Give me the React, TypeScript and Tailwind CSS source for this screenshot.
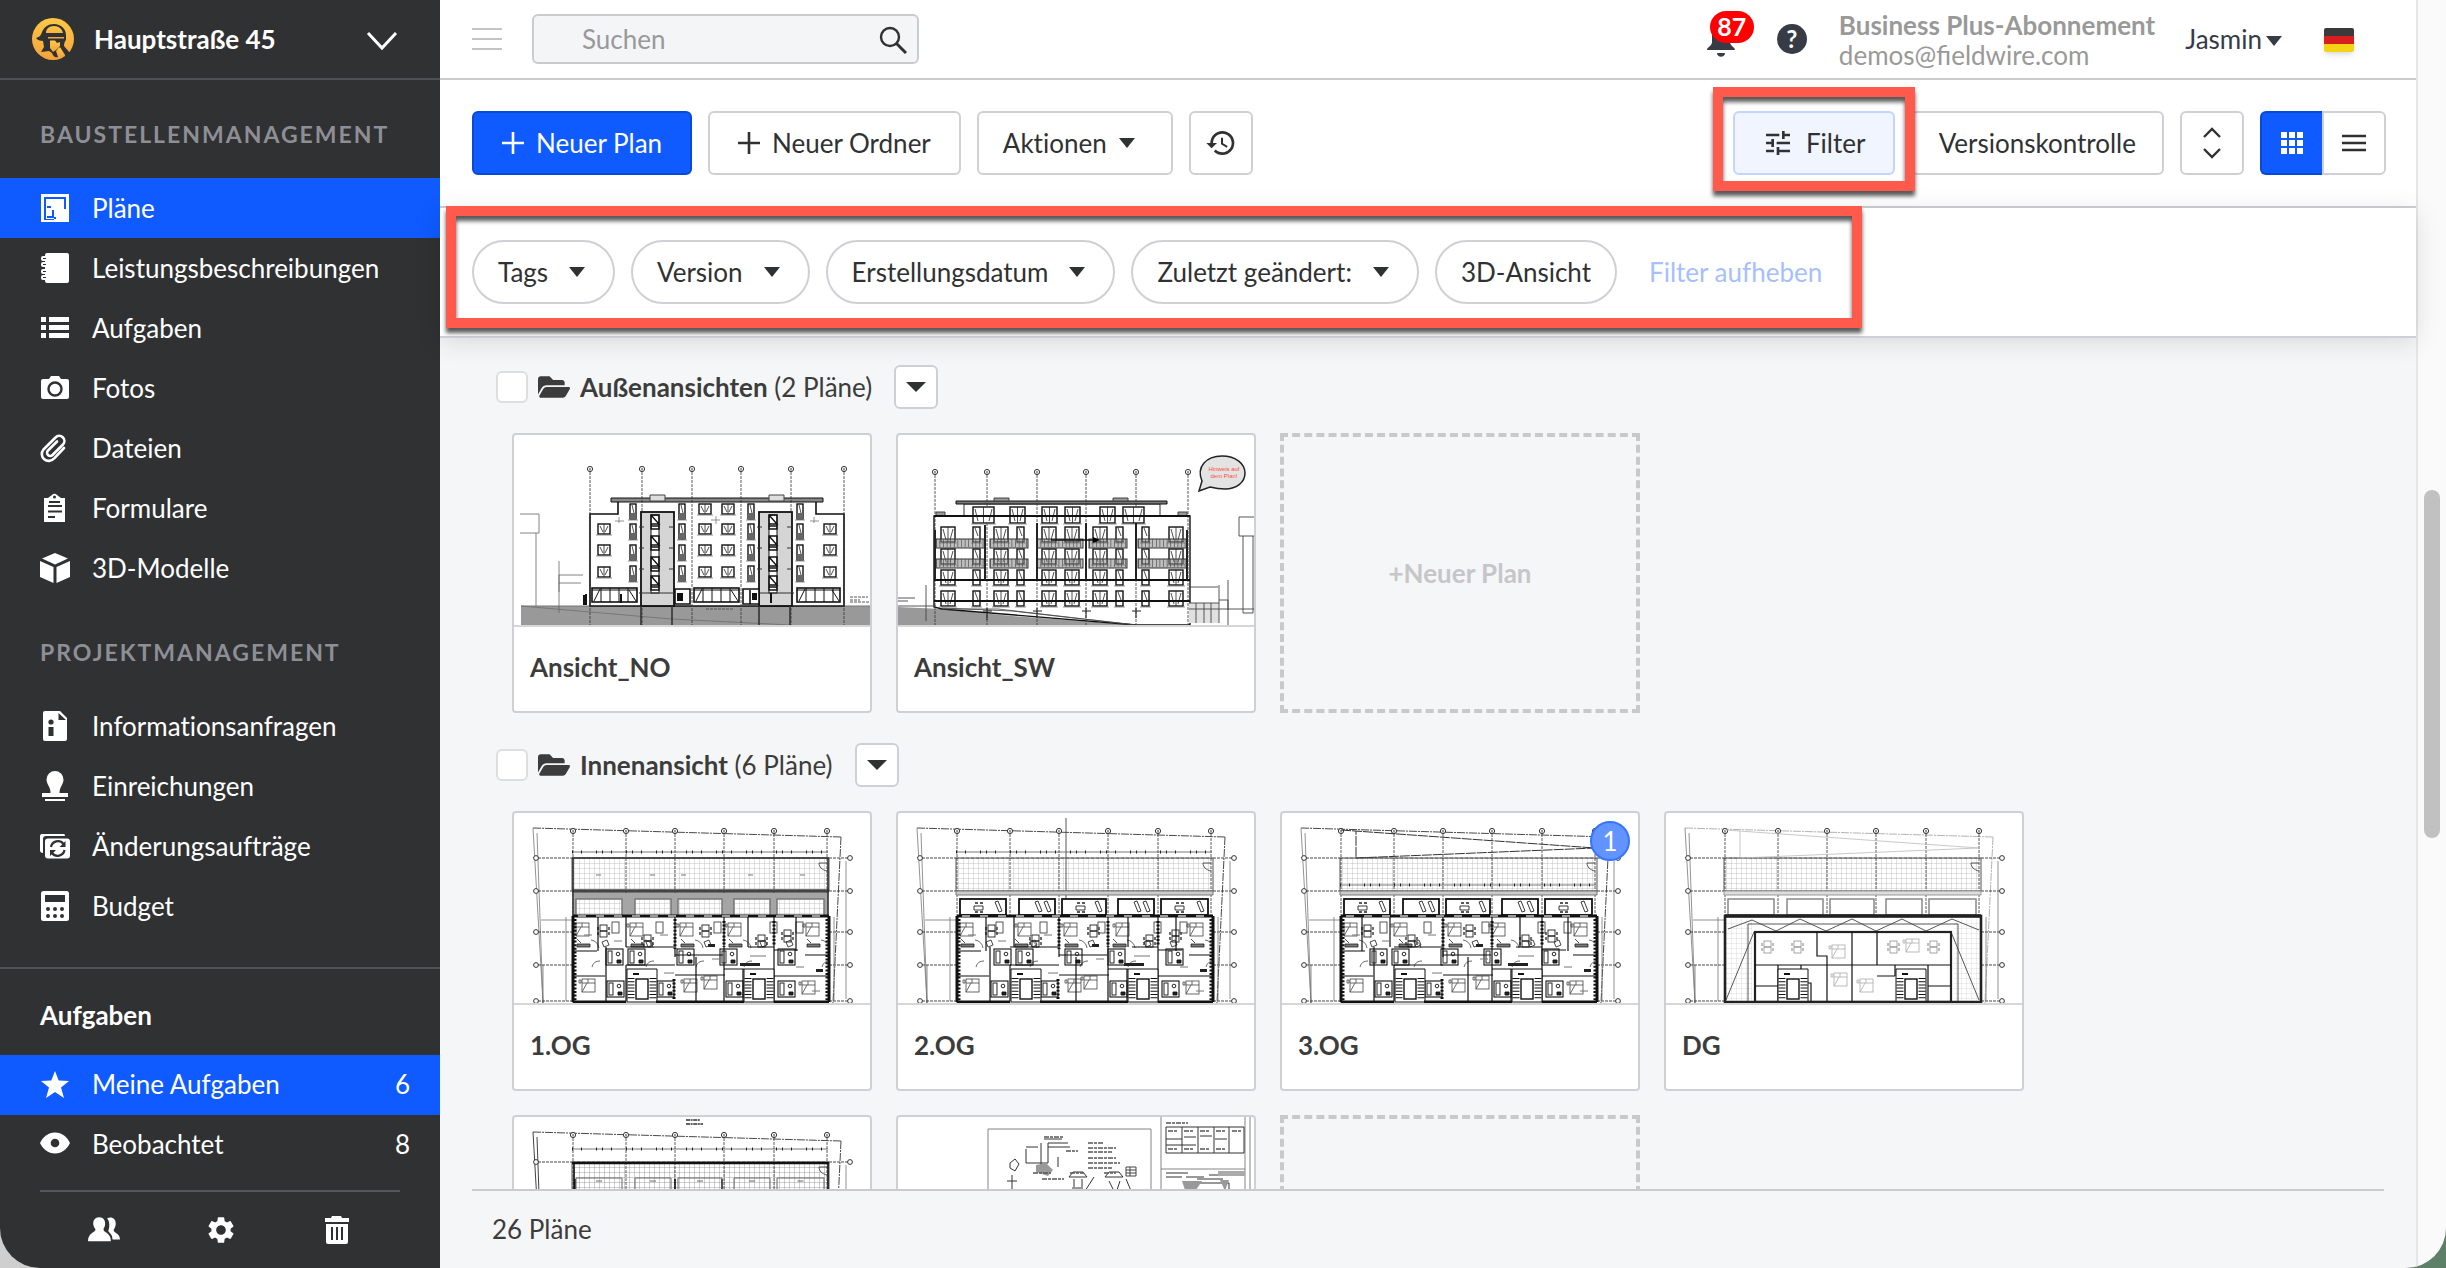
import { FC, ReactNode } from "react";
import { MdHistory, MdSettings, MdTune } from "react-icons/md";
import { FaFolderOpen } from "react-icons/fa";

/* ---------- icons ---------- */

interface IconProps {
  children: ReactNode;
  size?: string;
}

const Icon: FC<IconProps> = ({ children, size = "size-[30px]" }) => (
  <svg viewBox="0 0 30 30" className={`${size} shrink-0`} fill="currentColor" aria-hidden="true">
    {children}
  </svg>
);

const dark = "#303133";

const PlanIcon = () => (
  <Icon>
    <rect x="1" y="1" width="28" height="28" />
    <path d="M4 4h22v12h-2V6H6v20h8v-2h2v2h-2v1H4z" fill="#0f5bff" />
    <path d="M7 8h16v5h-3v-2h-5v5h-2v6H7v-7h3v-3H7z" />
    <path d="M12 17h2v8H7v-2h5zM7 13h4v2H7z" fill="#0f5bff" />
  </Icon>
);

const NotebookIcon = () => (
  <Icon>
    <path d="M7 0h20a2 2 0 0 1 2 2v26a2 2 0 0 1-2 2H7a2 2 0 0 1-2-2V2a2 2 0 0 1 2-2z" />
    <g stroke="currentColor" strokeWidth="2" fill={dark}>
      <rect x="2" y="4" width="5" height="3" rx="1" />
      <rect x="2" y="10" width="5" height="3" rx="1" />
      <rect x="2" y="17" width="5" height="3" rx="1" />
      <rect x="2" y="23" width="5" height="3" rx="1" />
    </g>
  </Icon>
);

const ListIcon = () => (
  <Icon>
    <path d="M1 4h5v5H1zM9 4h20v5H9zM1 12h5v5H1zM9 12h20v5H9zM1 20h5v5H1zM9 20h20v5H9z" />
  </Icon>
);

const CameraIcon = () => (
  <Icon>
    <path d="M9 6l2-3h8l2 3h6a2 2 0 0 1 2 2v16a2 2 0 0 1-2 2H3a2 2 0 0 1-2-2V8a2 2 0 0 1 2-2z" />
    <circle cx="15" cy="16" r="6.5" fill="none" stroke={dark} strokeWidth="2.4" />
  </Icon>
);

const ClipIcon = () => (
  <Icon>
    <path
      d="M24 15L14 25.500a6.800 6.800 0 0 1-10.500-9L15.500 4.500a5 5 0 0 1 7.500 7L12.500 22a3 3 0 0 1-4.500-4.500L17 8.500"
      fill="none"
      stroke="currentColor"
      strokeWidth="2.600"
      strokeLinecap="round"
    />
  </Icon>
);

const FormIcon = () => (
  <Icon>
    <path d="M4 5h4l4-3a3 3 0 0 1 5 0l4 3h4v24H4z" />
    <path d="M9 9h11M8 13h14M8 18.500h14M8 24h7" stroke={dark} strokeWidth="2" />
    <circle cx="14.500" cy="4" r="1.500" fill={dark} />
  </Icon>
);

const CubeIcon = () => (
  <Icon>
    <path d="M15 0l13 5.500L15 11.500 2 5.500zM0 8l13.500 6v16L0 24zM30 8l-13.500 6v16L30 24z" />
  </Icon>
);

const InfoIcon = () => (
  <Icon>
    <path d="M5 0h15l7 7v21a2 2 0 0 1-2 2H5a2 2 0 0 1-2-2V2a2 2 0 0 1 2-2z" />
    <path d="M18.500 2v7H26zM8.500 16h5v9h-5z" fill={dark} />
    <circle cx="11" cy="11" r="2.600" fill={dark} />
  </Icon>
);

const StampIcon = () => (
  <Icon>
    <path d="M15 0a8.500 8.500 0 0 1 8.500 8.500c0 5-4 7-4 13.500H28v4H2v-4h8.500c0-6.500-4-8.500-4-13.500A8.500 8.500 0 0 1 15 0zM5 28h20v2.500H5z" />
  </Icon>
);

const ChangeIcon = () => (
  <Icon>
    <path d="M2 3h22a2 2 0 0 1 1 2H6a3 3 0 0 0-3 3v14a3 3 0 0 1-3-2V5a2 2 0 0 1 2-2z" />
    <rect x="5" y="7.500" width="25" height="20" rx="3" />
    <g fill="none" stroke={dark} strokeWidth="2.200">
      <path d="M11 16a7 7 0 0 1 12.500-3M24.500 19A7 7 0 0 1 12 22" />
    </g>
    <path d="M25.500 10v6h-6zM10 25v-6h6z" fill={dark} />
  </Icon>
);

const CalcIcon = () => (
  <Icon>
    <rect x="1" y="0" width="28" height="30" rx="2.500" />
    <rect x="5" y="4" width="20" height="7" fill={dark} />
    <g fill={dark}>
      {[8, 15, 22].map((x) => [18, 25].map((y) => <circle key={`${x}-${y}`} cx={x} cy={y} r="2" />))}
    </g>
  </Icon>
);

const StarIcon = () => (
  <Icon>
    <path d="M15 1l3.700 9.500L29 11l-8 6.500L24 28l-9-6-9 6 3-10.500L1 11l10.300-.5z" />
  </Icon>
);

const EyeIcon = () => (
  <Icon>
    <path d="M15 3.500C22 3.500 27 8 30 14c-3 6-8 10.500-15 10.500S3 20 0 14C3 8 8 3.500 15 3.500z" />
    <circle cx="15" cy="14" r="4.300" fill={dark} />
  </Icon>
);

const PeopleIcon = () => (
  <Icon size="size-8">
    <path d="M18 4c4-2 8 0 8 5 0 3-1 4-2 6 0 3 6 3 6 9h-7c0-5-3-6-4-8 1-3 2-8-1-12z" />
    <path d="M10.500 3c4 0 6 3 5.500 7-.3 2-1 3-1.500 4 0 4 7 3 7 11.500H0C0 17 7 18 7 14c-1-1-1.500-2-2-4-.5-4 1.500-7 5.500-7z" />
  </Icon>
);

const TrashIcon = () => (
  <Icon>
    <path d="M10 1h9l1 2h7v4H3V3h6zM4 9h22v18a2 2 0 0 1-2 2H6a2 2 0 0 1-2-2z" />
    <path d="M10 12v13M15 12v13M20 12v13" stroke={dark} strokeWidth="2" />
  </Icon>
);

const Logo = () => (
  <svg viewBox="0 0 42 42" className="size-[42px] shrink-0" aria-hidden="true">
    <defs>
      <linearGradient id="logo" x1="0" y1="0" x2="0" y2="1">
        <stop offset="0" stopColor="#fdca45" />
        <stop offset="1" stopColor="#f5a13c" />
      </linearGradient>
    </defs>
    <circle cx="21" cy="21" r="21" fill="url(#logo)" />
    <path
      d="M4 20c4-1 5-3 6-6 2-5 6-8 12-8 7 0 12 5 12 11v5c-1 1-2 3-2 6l6 7-4 4-7-10-3 4 2 6c-3 1-5-1-6-4l-3-2-8 1 3-5-1-6c-3 0-6-1-7-3z"
      fill={dark}
    />
    <path d="M14 15c0-4 3-7 8-7s8 3 9 7zM16 19h16v1.500H16z" fill="url(#logo)" />
    <path d="M18 22.500h5l2 2.500 3-1v4l-4 4-3 2-3-4z" fill="url(#logo)" />
    <path d="M28 29l-3 5 3 6 5-3z" fill="url(#logo)" />
  </svg>
);

const Caret = () => (
  <svg viewBox="0 0 16 10" className="h-[10px] w-4 shrink-0" fill="currentColor" aria-hidden="true">
    <path d="M0 0h16L8 10z" />
  </svg>
);

const Plus = () => (
  <svg viewBox="0 0 22 22" className="size-[22px] shrink-0" aria-hidden="true">
    <path d="M11 0v22M0 11h22" stroke="currentColor" strokeWidth="2.600" />
  </svg>
);

/* ---------- plan thumbnails ---------- */

const axes = [59, 112, 161, 210, 260, 313];

const Windows: FC<{ xs: number[]; ys: number[]; w: number; h: number; shaded?: boolean }> = ({
  xs,
  ys,
  w,
  h,
  shaded,
}) => (
  <>
    {xs.map((x) =>
      ys.map((y) => (
        <g key={`${x}-${y}`}>
          <rect x={x} y={y} width={w} height={h} fill="#fff" stroke="#111" strokeWidth="1.400" />
          {shaded && <rect x={x} y={y + h - 6} width={w} height="6" fill="#666" />}
          <path
            d={w > 9 ? `M${x + w / 2} ${y}v${h}M${x + 2} ${y + 2}l3 ${h - 4}M${x + w - 2} ${y + 2}l-3 ${h - 4}` : `M${x + 2} ${y + 1}l${w - 4} ${h - 7}`}
            stroke="#222"
            strokeWidth=".8"
          />
          <path d={`M${x - 2} ${y + h + 1}h${w + 4}`} stroke="#777" strokeWidth=".8" />
        </g>
      ))
    )}
  </>
);

const AxisLines: FC<{ xs: number[]; y: number }> = ({ xs, y }) => (
  <g fill="#fff" stroke="#333" strokeWidth="1">
    {xs.map((x) => (
      <g key={x}>
        <path d={`M${x} ${y + 3}V190`} strokeWidth=".8" strokeDasharray="3 1" />
        <circle cx={x} cy={y} r="2.600" />
        <path d={`M${x} ${y - 1}v2.500`} />
      </g>
    ))}
  </g>
);

const ElevationNorth = () => (
  <>
    <path d="M7 171H356V190H7z" fill="#999" />
    <path d="M7 171H356M7 171l150 13 120 6" stroke="#777" fill="none" />
    <path d="M6 79h19v19H6M22 98v73M45 157v-17h24M45 148h22M45 126v52" stroke="#666" strokeWidth=".8" fill="none" />
    <path d="M76 79h28V66h198v13h28v92H76z" fill="#fff" stroke="#111" strokeWidth="1.600" />
    <path d="M97 63h212v4H97z" fill="#888" stroke="#111" />
    <path d="M136 60h15v6h-15zM255 60h15v6h-15z" fill="#ddd" stroke="#444" />
    <AxisLines xs={[76, 128, 178, 227, 277, 330]} y={34} />
    <Windows xs={[116, 165, 234, 283]} ys={[69, 89, 110, 131]} w={6} h={15} shaded />
    <Windows xs={[185, 208]} ys={[69]} w={12} h={10} />
    <Windows xs={[84, 185, 208, 310]} ys={[89, 110, 132]} w={12} h={10} />
    {[127, 245].map((x) => (
      <g key={x}>
        <rect x={x} y="77" width="33" height="94" fill="#d5d5d5" stroke="#111" strokeWidth="1.800" />
        <path d={`M${x} 171v19M${x + 31} 171v19`} stroke="#333" strokeWidth="1.600" />
        <rect x={x + 10} y="80" width="8" height="78" fill="#fff" stroke="#111" />
        {[80, 101, 122, 141].map((y) => (
          <path
            key={y}
            d={`M${x + 10} ${y}h8v14h-8zM${x + 10} ${y + 9}h8l-8-9M${x + 10} ${y + 11}h8`}
            fill="none"
            stroke="#111"
            strokeWidth="1.400"
          />
        ))}
        <path d={`M${x - 2} 92h5M${x - 2} 113h5M${x - 2} 134h5M${x + 28} 92h5M${x + 28} 113h5M${x + 28} 134h5M${x - 2} 158h37`} stroke="#333" />
      </g>
    ))}
    {[
      [78, 45],
      [180, 45],
      [283, 43],
    ].map(([x, w]) => (
      <g key={x} stroke="#111" fill="#fff">
        <rect x={x} y="153" width={w} height="14" strokeWidth="1.600" />
        <path d={`M${x + 9} 153v14M${x + 18} 153v14M${x + 27} 153v14M${x + 36} 153v14M${x} 155h${w}M${x + 2} 166l6-12M${x + w - 8} 155l7 11`} />
      </g>
    ))}
    <path d="M161 154h15v15h-15zM229 154h16v15h-16zM236 155v14" fill="#fff" stroke="#111" strokeWidth="1.600" />
    <path d="M163 158h6v8h-6zM238 158h5v7h-5z" fill="#111" />
    <path d="M70 160v10M72 159v11M107 159v9M257 158v10" stroke="#111" strokeWidth="2" />
    <path d="M336 162h18M336 165h10M336 167h20M192 174h27" stroke="#555" strokeWidth="1" strokeDasharray="3 1" />
    <path d="M105 82v6M101 86h9M202 81v8M197 85h9M300 82v6M296 86h9" stroke="#777" strokeWidth=".8" />
  </>
);

const ElevationSouth = () => (
  <>
    <path d="M0 172l44 2 70 7 124 9H0z" fill="#999" />
    <path d="M36 81h256v109h-54L44 174l-8-2z" fill="#fff" stroke="#111" strokeWidth="1.400" />
    <path d="M44 174h56l138 16M44 173l70 3 124 14" fill="none" stroke="#444" strokeWidth=".8" />
    <path d="M66 81V69h196v12z" fill="#fff" stroke="#333" />
    <path d="M58 66h211v3H58z" fill="#777" stroke="#111" />
    <path d="M96 63h15v3H96zM215 63h15v3h-15zM38 77h9v4h-9zM280 77h9v4h-9z" fill="#999" stroke="#444" />
    <AxisLines xs={[37, 89, 139, 188, 238, 290]} y={37} />
    <Windows xs={[75, 225]} ys={[72]} w={21} h={16} />
    <Windows xs={[112, 144, 167, 202]} ys={[72]} w={15} h={16} />
    <Windows xs={[43, 96, 144, 167, 195, 271]} ys={[92, 114, 135, 156]} w={14} h={15} />
    <Windows xs={[75, 119, 218, 244]} ys={[92, 114, 135, 156]} w={7} h={15} />
    {[
      [38, 49],
      [92, 38],
      [139, 46],
      [191, 38],
      [240, 49],
    ].map(([x, w]) =>
      [104, 124].map((y) => (
        <g key={`${x}-${y}`}>
          <rect x={x} y={y} width={w} height="9" fill="#888" fillOpacity=".55" stroke="#333" />
          <path d={`M${x} ${y + 4}h${w}`} stroke="#444" strokeWidth="8" strokeDasharray=".6 3" />
        </g>
      ))
    )}
    <path d="M36 81h256M36 145h256M36 166h256" stroke="#111" strokeWidth="1.800" />
    <path d="M37 95v50M87 90v55M139 88v57M188 88v57M238 88v57M289 95v50" stroke="#222" strokeWidth="2" />
    <path d="M153 105h44" stroke="#111" strokeWidth="1.600" />
    <path d="M195 102l7 3-7 3z" />
    <path d="M291 168h30v20h-30z" fill="#e0e0e0" />
    <path d="M291 152h29M291 168h30M291 174h65M298 168v20M306 168v20M313 168v20M321 150v38M321 165h9v25M330 145v30M356 82h-15v19h15M345 101v77h10v-77M0 163h17M0 166h10M0 171h38M28 150v36" stroke="#444" strokeWidth=".9" fill="none" />
    <path d="M89 173v12M85 176h9M139 173v10M135 176h9M188 173v10M184 176h9M238 173v10M234 176h9" stroke="#222" />
    <path d="M304 46c-6-14 4-25 20-25 14 0 23 8 23 17s-8 16-20 16c-6 0-11-1-15-2l-11 4z" fill="#e3e3e3" stroke="#222" strokeWidth="1.500" />
    <text x="326" y="36" fontSize="6" fill="#ff4b3e" textAnchor="middle" fontFamily="Liberation Sans, sans-serif">
      Hinweis auf
    </text>
    <text x="326" y="43" fontSize="6" fill="#ff4b3e" textAnchor="middle" fontFamily="Liberation Sans, sans-serif">
      dem Plan!
    </text>
  </>
);

const boxes = [
  [62, 46],
  [121, 36],
  [164, 44],
  [220, 36],
  [263, 47],
];

/* site boundary, axes and roof terrace shared by all floors */
const SitePlan: FC<{ id: string; light?: boolean; dense?: boolean }> = ({ id, light, dense }) => (
  <>
    <defs>
      <pattern id={id} width="5" height="5" patternUnits="userSpaceOnUse">
        <path d="M0 0H5M0 0V5" stroke={dense ? "#777" : "#aaa"} strokeWidth=".7" />
      </pattern>
    </defs>
    <path d="M19 15L327 24M327 24L319 190" stroke={light ? "#aaa" : "#333"} strokeWidth=".9" strokeDasharray="8 1 2 1" fill="none" />
    <path d="M19 15l10 175M23 20l6 170M27 107h32M29 152v38" stroke={dense ? "#111" : "#777"} strokeWidth=".8" fill="none" />
    <path d="M58 45h257v33H58z" fill={`url(#${id})`} stroke="#555" strokeWidth="1" />
    <AxisLines xs={axes} y={18} />
    {[45, 78, 119, 152, 188].map((y) => (
      <g key={y} stroke="#333" fill="#fff">
        <path d={`M24 ${y}H58M315 ${y}h19`} strokeWidth=".9" strokeDasharray="3 1" />
        <path d={`M58 ${y}h256`} strokeWidth=".5" strokeDasharray="3 2" />
        <circle cx="22" cy={y} r="2.400" />
        <circle cx="336" cy={y} r="2.400" />
      </g>
    ))}
    <path d="M332 48v138M320 104v84M52 104v84" stroke="#777" strokeWidth=".8" />
    <path d="M305 50h8M305 50c0 4 3 7 8 8" stroke="#444" strokeWidth=".9" fill="none" />
  </>
);

const Stairs: FC<{ x: number }> = ({ x }) => (
  <g stroke="#111" fill="#fff">
    <path d={`M${x} 156h30v33h-30z`} strokeWidth="1" />
    <path d={`M${x + 4} 165v22M${x + 26} 165v22`} strokeWidth="7" strokeDasharray="1 2.200" />
    <rect x={x + 9} y="166" width="12" height="20" strokeWidth="1.400" />
    <path d={`M${x + 6} 161h6`} strokeWidth="2" />
  </g>
);

const Bed: FC<{ x: number; y: number }> = ({ x, y }) => (
  <g fill="none" stroke="#444" strokeWidth=".8">
    <rect x={x} y={y} width="13" height="13" />
    <path d={`M${x} ${y + 4}h13M${x + 6} ${y}v4M${x} ${y + 13}l5-9M${x - 3} ${y + 1}h2v3h-2z`} />
  </g>
);

const Table: FC<{ x: number; y: number }> = ({ x, y }) => (
  <g fill="none" stroke="#222" strokeWidth=".9">
    <rect x={x + 2} y={y} width="7" height="12" />
    <path d={`M${x} ${y + 2}v3M${x} ${y + 7}v3M${x + 11} ${y + 2}v3M${x + 11} ${y + 7}v3M${x + 2} ${y + 6}h7`} strokeWidth="1.300" />
  </g>
);

const Bath: FC<{ x: number; y: number }> = ({ x, y }) => (
  <g fill="none" stroke="#111" strokeWidth=".9">
    <rect x={x} y={y} width="17" height="16" strokeWidth="1.100" />
    <rect x={x + 2} y={y + 2} width="4" height="12" />
    <circle cx={x + 12} cy={y + 5} r="1.800" />
    <path d={`M${x + 11} ${y + 11}h4v3h-4z`} fill="#222" />
  </g>
);

/* furnished flats below the terrace, `shift` moves the partitions between floors */
const Flats: FC<{ shift: number }> = ({ shift }) => (
  <>
    <path d="M59 104h256v85H59z" fill="#fff" />
    {[62, 116, 166, 214, 292].map((x, i) => (
      <g key={x}>
        <Bed x={x + (i % 2) * shift} y={110} />
        <path d={`M${x + 1} 131h13v3h-13zM${x + 1} 126l4 4`} fill="#777" stroke="#222" strokeWidth=".8" />
        <path d={`M${x + 15} 127a9 9 0 0 1 8 8M${x + 24} 148a8 8 0 0 0-8 6`} fill="none" stroke="#444" strokeWidth=".8" />
      </g>
    ))}
    {[84, 128, 186, 242, 268].map((x) => (
      <g key={x}>
        <Table x={x + shift} y={112 + (x % 3) * 5} />
        <rect x={x + 14} y="109" width="7" height="11" fill="none" stroke="#444" strokeWidth=".9" />
        <path d={`M${x + 4} 129l5-2 2 5-5 2z`} fill="none" stroke="#333" strokeWidth=".9" />
      </g>
    ))}
    {[92, 114, 163, 206, 264].map((x) => (
      <Bath key={x} x={x + shift} y={136} />
    ))}
    {[93, 143, 212, 264].map((x) => (
      <Bath key={x} x={x} y={168} />
    ))}
    <Bed x={68} y={166} />
    <Bed x={170} y={166} />
    <Bed x={190 - shift} y={163} />
    <Bed x={288} y={168} />
    <path
      d={`M${84 + shift} 104v34M${112 + shift} 104v30M161 104v40M${182 - shift} 144v44M210 104v84M${234 - shift} 104v30M260 104v50M${282 - shift} 104v34M92 134v54M59 138h24M112 152h49M112 134h48M161 142h48M234 134h26M210 156h20M260 137h24M291 142h24M59 163h32M161 162h50M260 163h55M112 152v36M142 156v32M229 156v32M260 152v36`}
      fill="none"
      stroke="#111"
      strokeWidth="1.200"
    />
    <path d="M61 106v82M313 106v82M161 106v30M210 108v26M260 108v24M160 166v20" stroke="#111" strokeWidth="3" strokeDasharray="2 1.600" />
    <path d="M146 122h8M198 146h8M236 143h16M298 178h8M70 122h8M100 128h8M150 160h10M282 154h8M240 160h10M120 158h9" stroke="#777" strokeWidth="1" />
    <path d="M226 150h20v3h-20zM302 156h7v3h-7zM194 131h7v3h-7z" fill="#222" />
    <Stairs x={113} />
    <Stairs x={230} />
    <path d="M59 103h256M59 189h53M142 189h88M260 189h55M59 103v86M315 103v86" stroke="#111" strokeWidth="3" fill="none" />
    <path d="M64 103h250" stroke="#999" strokeWidth="2" strokeDasharray="8 10" />
  </>
);

const TerraceFurniture = () => (
  <>
    <path d="M58 78h257v4H58z" fill="#ccc" stroke="#777" />
    {boxes.map(([x, w], i) => (
      <g key={x}>
        <rect x={x} y="86" width={w} height="16" fill="#fff" stroke="#111" strokeWidth="1.800" />
        <path d={`M${x + w - 11} 89l3-1 4 10-3 1z`} fill="#fff" stroke="#222" strokeWidth=".9" />
        {i % 2 ? (
          <path d={`M${x + w - 20} 89l3-1 4 10-3 1z`} fill="#fff" stroke="#222" strokeWidth=".9" />
        ) : (
          <>
            <path d={`M${x + 14} 93h9v4h-9z`} fill="#fff" stroke="#222" strokeWidth=".9" />
            <path d={`M${x + 15} 90h3M${x + 20} 90h3M${x + 15} 99h3M${x + 20} 99h3`} stroke="#222" strokeWidth="1.400" />
          </>
        )}
      </g>
    ))}
  </>
);

const TickLine: FC<{ y: number }> = ({ y }) => (
  <>
    <path d={`M58 ${y}h256`} stroke="#555" strokeWidth=".8" />
    <path d={`M58 ${y}h256`} stroke="#222" strokeWidth="3" strokeDasharray="1 8 1 14 1 5" />
  </>
);

const FloorOne = () => (
  <>
    <SitePlan id="grid-1" />
    <TickLine y={39} />
    <path d="M60 80h254v23H60z" fill="#a5a5a5" />
    <path d="M58 78h257" stroke="#444" strokeWidth="3.500" />
    <path d="M58 45h257M59 45v58M314 45v58" stroke="#333" strokeWidth="1.600" />
    {boxes.map(([x, w]) => (
      <g key={x} stroke="#777">
        <rect x={x} y="86" width={w} height="17" fill="#fff" />
        <rect x={x} y="86" width={w} height="17" fill="url(#grid-1)" />
      </g>
    ))}
    <path d="M82 62h5M136 62h5M167 62h5M234 62h5M286 62h5" stroke="#777" strokeWidth="1.200" />
    <Flats shift={0} />
  </>
);

const FloorTwo = () => (
  <>
    <SitePlan id="grid-2" />
    <TickLine y={39} />
    <path d="M168 5v98" stroke="#555" />
    <TerraceFurniture />
    <Flats shift={4} />
  </>
);

const FloorThree = () => (
  <>
    <SitePlan id="grid-3" />
    <path d="M59 17l254 18L74 45V18" fill="none" stroke="#333" strokeDasharray="10 1" />
    <TickLine y={72} />
    <TerraceFurniture />
    <Flats shift={-4} />
  </>
);

const Attic = () => (
  <>
    <SitePlan id="grid-4" light />
    <path d="M59 17l254 18L74 45V18" fill="none" stroke="#bbb" strokeWidth=".8" />
    <path d="M58 78h257v4H58z" fill="#ddd" stroke="#999" />
    {boxes.map(([x, w]) => (
      <rect key={x} x={x} y="86" width={w} height="16" fill="#fff" stroke="#888" strokeWidth="1.500" />
    ))}
    <path d="M59 104h256v84H59z" fill="#fff" />
    <path d="M60 106h26v82H60zM288 106h26v82h-26z" fill="url(#grid-4)" opacity=".6" />
    <path d="M62 116L86 107l24 11 24-12 26 12 26-12 24 12 26-12 24 12 26-12 27 11M82 111h210v77M82 111v77M60 187l28-68M313 187l-28-68" fill="none" stroke="#444" strokeWidth=".9" />
    <rect x="89" y="119" width="196" height="70" fill="#fff" stroke="#222" strokeWidth="2.200" />
    <g opacity=".45">
      {[96, 126, 222, 262].map((x) => (
        <Table key={x} x={x} y={128} />
      ))}
      <Bed x={166} y={132} />
      <Bed x={194} y={166} />
      <Bed x={168} y={160} />
      <Bed x={240} y={126} />
    </g>
    <path d="M89 152h196M151 119v24h10v9M186 119v70M161 152v37M211 119v33M112 152v37M135 152v18h10v19M211 163h18M229 152v11M262 152v37M89 173h23M262 173h22" stroke="#111" strokeWidth="1.200" fill="none" />
    <Stairs x={112} />
    <Stairs x={230} />
    <path d="M59 103h256v86H59z" fill="none" stroke="#222" strokeWidth="2.600" />
    <path d="M59 103h256" stroke="#222" strokeWidth="3.600" />
  </>
);

const RoofPlan = () => (
  <>
    <SitePlan id="grid-5" dense />
    <TickLine y={32} />
    <path d="M59 78h256v30H59z" fill="url(#grid-5)" />
    <path d="M58 46h257" stroke="#111" strokeWidth="2.400" />
    <path d="M60 46v60M314 46v60M61 62v30M161 62v30M208 62v30" stroke="#111" strokeWidth="1.600" />
    {boxes.map(([x, w]) => (
      <path key={x} d={`M${x} 80V61h${w}v19M${x + w / 2 - 3} 64h6`} stroke="#666" fill="none" />
    ))}
    <path d="M172 3h14M172 7h17" stroke="#333" strokeWidth="1.600" strokeDasharray="4 .6 2 .6" />
  </>
);

const DetailSheet = () => (
  <>
    <path d="M90 80V12h163v68M263 0v80M347 0v80M352 0v80M263 52h84" stroke="#777" strokeWidth=".9" fill="none" />
    <path d="M0 79h83M83 79v30" stroke="#222" strokeDasharray="6 1" />
    <g fill="none" stroke="#333" strokeWidth="1">
      <path d="M128 32v14h22v-20h20M128 30h12M146 22h18M112 46l5-4 4 5-4 7-5-3zM114 58v18M109 64h10M143 26v24M150 30h22M160 40v10" />
      <path d="M171 60h18l-4-5h-10zM176 62v14M184 62v14M207 60h18l-4-5h-10zM211 64l6 12M222 64l-4 12M196 60l-9 14M228 62l6 14" />
      <path d="M268 10h78v26h-78zM284 10v26M300 10v26M316 10v26M331 10v26M268 22h16M268 28h30M286 20h12M302 19h12M317 22h12" />
      <path d="M285 66h46v10M299 62h26M288 60h18M311 58h10M268 56h22M268 60h16" />
    </g>
    <path d="M138 48l10-2 7 7-5 6-12-4zM284 64h20l-8 12h-8zM322 63h9l-4 11zM174 70h10v8h-10z" fill="#999" />
    <path d="M320 54h27v5h-27z" fill="#aaa" />
    <g stroke="#555" strokeWidth="1.300" strokeDasharray="5 1 3 1">
      <path d="M190 26h16M190 31h28M190 35h24M190 41h28M190 46h32M190 51h24M146 20h20M168 34h12M135 56h18M144 62h22M172 56h14M206 56h12" />
      <path d="M268 6h22M270 14h10M286 14h10M302 14h10M318 14h10M334 14h10M270 32h10M286 32h10M302 32h10M318 32h10" />
    </g>
    <path d="M228 50h10v9h-10zM228 53h10M228 56h10M232 50v9" stroke="#444" fill="none" />
  </>
);

interface Plan {
  title?: string;
  drawing: FC;
  badge?: number;
}

const PlanCard: FC<{ plan: Plan }> = ({ plan }) => {
  const Drawing = plan.drawing;
  return (
    <a
      href="#plan"
      className="relative flex h-[280px] w-[360px] flex-col rounded border-2 border-[#cfd0d5] bg-white"
    >
      <svg viewBox="0 0 356 190" className="h-[190px] w-full shrink-0" aria-hidden="true">
        <Drawing />
      </svg>
      <span className="flex flex-1 items-center border-t-2 border-[#d6d6d8] px-4 pb-1 text-[26px] font-bold text-[#3c3c3c]">
        {plan.title}
      </span>
      {plan.badge && (
        <span className="absolute top-2 right-2 flex size-10 items-center justify-center rounded-full border-2 border-[#3575ff] bg-[#6293ff] text-[26px] text-white">
          {plan.badge}
        </span>
      )}
    </a>
  );
};

const NewPlanTile: FC<{ label?: string }> = ({ label }) => (
  <button
    type="button"
    aria-label="Neuer Plan"
    className="h-[280px] w-[360px] border-4 border-dashed border-[#c9c9cb] text-[26px] font-bold text-[#c6c6c8]"
  >
    {label}
  </button>
);

interface FolderProps {
  id: string;
  name: string;
  count: number;
  plans: Plan[];
  newLabel?: string;
}

const Folder: FC<FolderProps> = ({ id, name, count, plans, newLabel }) => (
  <section>
    <div className="mb-6 flex h-11 items-center">
      <input
        id={id}
        type="checkbox"
        className="size-8 appearance-none rounded-md border-2 border-[#dedee0] bg-white"
      />
      <label htmlFor={id} className="ml-[10px] flex items-center text-[26px] text-[#3c3c3c]">
        <FaFolderOpen className="mr-[10px] size-8" />
        <b>{name}</b>&nbsp;({count} Pläne)
      </label>
      <button
        type="button"
        aria-label={`${name} Menü`}
        className="ml-[22px] flex h-11 w-11 items-center justify-center rounded-md border-2 border-[#cfd0d5] bg-white text-[#303133]"
      >
        <svg viewBox="0 0 20 10" className="h-[10px] w-5" fill="currentColor" aria-hidden="true">
          <path d="M0 0h20L10 10z" />
        </svg>
      </button>
    </div>
    <div className="flex flex-wrap gap-6 pl-4">
      {plans.map((plan, i) => (
        <PlanCard key={i} plan={plan} />
      ))}
      <NewPlanTile label={newLabel} />
    </div>
  </section>
);

/* ---------- sidebar ---------- */

interface NavItemProps {
  icon: FC;
  label: string;
  count?: number;
  active?: boolean;
}

const NavItem: FC<NavItemProps> = ({ icon: ItemIcon, label, count, active }) => (
  <a
    href="#"
    className={`flex h-[60px] items-center pr-[30px] pl-10 text-[26px] text-white ${active ? "bg-[#0f5bff]" : ""}`}
  >
    <ItemIcon />
    <span className="ml-[22px] flex-1">{label}</span>
    {count && <span>{count}</span>}
  </a>
);

const NavHeading: FC<{ children: ReactNode }> = ({ children }) => (
  <h2 className="flex h-[98px] items-center pt-[10px] pl-10 text-[23px] font-bold tracking-[2px] text-[#8e8f95]">
    {children}
  </h2>
);

const Sidebar = () => (
  <aside className="flex w-[440px] shrink-0 flex-col bg-[#303133] text-white">
    <button type="button" className="flex h-20 shrink-0 items-center border-b-2 border-[#505154] pr-[42px] pl-8 text-[26px] font-bold">
      <Logo />
      <span className="ml-5 flex-1 text-left">Hauptstraße 45</span>
      <svg viewBox="0 0 32 20" className="mt-1 h-5 w-8" aria-hidden="true">
        <path d="M2 2l14 15L30 2" fill="none" stroke="currentColor" strokeWidth="3" />
      </svg>
    </button>
    <nav className="border-b-2 border-[#505154] pb-[31px]">
      <NavHeading>BAUSTELLENMANAGEMENT</NavHeading>
      <NavItem icon={PlanIcon} label="Pläne" active />
      <NavItem icon={NotebookIcon} label="Leistungsbeschreibungen" />
      <NavItem icon={ListIcon} label="Aufgaben" />
      <NavItem icon={CameraIcon} label="Fotos" />
      <NavItem icon={ClipIcon} label="Dateien" />
      <NavItem icon={FormIcon} label="Formulare" />
      <NavItem icon={CubeIcon} label="3D-Modelle" />
      <NavHeading>PROJEKTMANAGEMENT</NavHeading>
      <NavItem icon={InfoIcon} label="Informationsanfragen" />
      <NavItem icon={StampIcon} label="Einreichungen" />
      <NavItem icon={ChangeIcon} label="Änderungsaufträge" />
      <NavItem icon={CalcIcon} label="Budget" />
    </nav>
    <h2 className="flex h-[86px] items-center pt-2 pl-10 text-[26px] font-bold">Aufgaben</h2>
    <NavItem icon={StarIcon} label="Meine Aufgaben" count={6} active />
    <NavItem icon={EyeIcon} label="Beobachtet" count={8} />
    <div className="mx-10 mt-4 flex h-[78px] items-center justify-between border-t-2 border-[#55565a] px-12">
      <button type="button" aria-label="Personen">
        <PeopleIcon />
      </button>
      <button type="button" aria-label="Einstellungen">
        <MdSettings className="size-8" />
      </button>
      <button type="button" aria-label="Papierkorb">
        <TrashIcon />
      </button>
    </div>
  </aside>
);

/* ---------- header and toolbars ---------- */

const Header = () => (
  <header className="flex h-20 shrink-0 items-center border-b-2 border-[#cbcbcd] bg-white pr-[62px] pl-8">
    <button type="button" aria-label="Menü" className="flex w-[30px] flex-col gap-2">
      <span className="h-[2px] bg-[#c4c4c6]" />
      <span className="h-[2px] bg-[#c4c4c6]" />
      <span className="h-[2px] bg-[#c4c4c6]" />
    </button>
    <div className="relative ml-[30px]">
      <input
        type="search"
        aria-label="Suchen"
        placeholder="Suchen"
        className="h-[50px] w-[387px] rounded-md border-2 border-[#cbcbcd] bg-[#f4f5f7] pl-12 text-[26px] placeholder:text-[#999]"
      />
      <svg viewBox="0 0 28 28" className="absolute top-3 right-3 size-7" aria-hidden="true">
        <circle cx="11" cy="11" r="9" fill="none" stroke="#303133" strokeWidth="2.400" />
        <path d="M17 17l10 10" stroke="#303133" strokeWidth="3" />
      </svg>
    </div>
    <div className="ml-auto flex items-center text-[#363b46]">
      <button type="button" aria-label="Benachrichtigungen" className="relative h-10 w-[30px]">
        <svg viewBox="0 0 30 34" className="mt-1 h-[34px] w-[30px]" fill="currentColor" aria-hidden="true">
          <path d="M15 0c6 0 9 4 9 10v8c0 4 5 5 5 8H1c0-3 5-4 5-8v-8C6 4 9 0 15 0zM11 29h8c0 5-8 5-8 0z" />
        </svg>
        <span className="absolute -top-2 left-1 flex h-8 w-11 items-center justify-center rounded-full bg-[#ff0000] text-[25px] font-bold text-white">
          87
        </span>
      </button>
      <button
        type="button"
        aria-label="Hilfe"
        className="ml-[41px] flex size-[30px] items-center justify-center rounded-full bg-[#363b46] text-[24px] font-bold text-white"
      >
        ?
      </button>
      <div className="ml-8 pt-[2px] text-[26px] leading-[30px] text-[#999]">
        <b className="block">Business Plus-Abonnement</b>
        <span className="[font-variant-ligatures:normal]">demos@fieldwire.com</span>
      </div>
      <button type="button" className="ml-[30px] flex items-center gap-1 text-[26px]">
        Jasmin
        <svg viewBox="0 0 16 10" className="mt-1 h-[10px] w-4" fill="currentColor" aria-hidden="true">
          <path d="M0 0h16L8 10z" />
        </svg>
      </button>
      <span className="mt-[2px] ml-[42px] flex h-6 w-[30px] flex-col overflow-hidden rounded-xs shadow-md">
        <span className="flex-1 bg-[#3a3a3a]" />
        <span className="flex-1 bg-[#d81e1e]" />
        <span className="flex-1 bg-[#f3d313]" />
      </span>
    </div>
  </header>
);

const button = "flex h-16 items-center justify-center rounded-md border-2 border-[#cfd0d5] bg-white text-[#303133]";
const marker = "pointer-events-none absolute border-10 border-[#ff5a4b] drop-shadow-[0_5px_2px_rgba(0,0,0,0.65)]";

const Toolbar = () => (
  <div className="flex h-32 shrink-0 items-center gap-4 border-b-2 border-[#cfd0d5] bg-white pr-[30px] pl-8 text-[26px]">
    <button
      type="button"
      className="flex h-16 items-center gap-3 rounded-md border-2 border-[#0849d8] bg-[#0f5bff] px-7 text-white"
    >
      <Plus /> Neuer Plan
    </button>
    <button type="button" className={`${button} gap-3 px-7`}>
      <Plus /> Neuer Ordner
    </button>
    <button type="button" className={`${button} gap-3 pr-9 pl-6`}>
      Aktionen <Caret />
    </button>
    <button type="button" aria-label="Verlauf" className={`${button} w-16`}>
      <MdHistory className="size-8" />
    </button>
    <div className="ml-auto flex gap-4">
      <div className="relative">
        <button
          type="button"
          className="flex h-16 w-[162px] items-center justify-center gap-3 rounded-md border-2 border-[#c3d4ff] bg-[#f0f5ff] text-[#303133]"
        >
          <MdTune className="size-8" /> Filter
        </button>
        <div className={`${marker} -inset-x-5 -top-6 -bottom-4 z-10`} />
      </div>
      <button type="button" className={`${button} px-[26px]`}>
        Versionskontrolle
      </button>
      <button type="button" aria-label="Sortieren" className={`${button} w-16`}>
        <svg viewBox="0 0 20 32" className="h-8 w-5" fill="none" stroke="currentColor" strokeWidth="2.400" aria-hidden="true">
          <path d="M2 10l8-8 8 8M2 22l8 8 8-8" />
        </svg>
      </button>
      <div className="flex">
        <button
          type="button"
          aria-label="Rasteransicht"
          className="flex h-16 w-[62px] items-center justify-center rounded-l-md border-2 border-r-0 border-[#0849d8] bg-[#0f5bff] text-white"
        >
          <svg viewBox="0 0 22 22" className="size-[22px]" fill="currentColor" aria-hidden="true">
            <path d="M0 0h6v6H0zM8 0h6v6H8zM16 0h6v6h-6zM0 8h6v6H0zM8 8h6v6H8zM16 8h6v6h-6zM0 16h6v6H0zM8 16h6v6H8zM16 16h6v6h-6z" />
          </svg>
        </button>
        <button
          type="button"
          aria-label="Listenansicht"
          className="flex h-16 w-16 items-center justify-center rounded-r-md border-2 border-[#cfd0d5] bg-white text-[#303133]"
        >
          <svg viewBox="0 0 24 18" className="h-[18px] w-6" stroke="currentColor" strokeWidth="2.600" aria-hidden="true">
            <path d="M0 2h24M0 9h24M0 16h24" />
          </svg>
        </button>
      </div>
    </div>
  </div>
);

const Chip: FC<{ label: string; menu?: boolean }> = ({ label, menu }) => (
  <button
    type="button"
    className="flex h-16 items-center gap-[21px] rounded-full border-2 border-[#cfd0d5] bg-white px-6 text-[#303133]"
  >
    {label}
    {menu && (
      <span className="mr-1">
        <Caret />
      </span>
    )}
  </button>
);

const FilterBar = () => (
  <div className="relative z-10 flex h-[130px] shrink-0 items-center border-b-2 border-[#cfd0d5] bg-white pl-8 text-[26px] shadow-[0_4px_24px_rgba(0,0,0,0.12)]">
    <div className="relative flex items-center gap-4">
      <Chip label="Tags" menu />
      <Chip label="Version" menu />
      <Chip label="Erstellungsdatum" menu />
      <Chip label="Zuletzt geändert:" menu />
      <Chip label="3D-Ansicht" />
      <button type="button" className="px-4 text-[#a6bfff]">
        Filter aufheben
      </button>
      <div className={`${marker} -top-[34px] -right-6 -bottom-6 -left-[26px]`} />
    </div>
  </div>
);

const elevations: Plan[] = [
  { title: "Ansicht_NO", drawing: ElevationNorth },
  { title: "Ansicht_SW", drawing: ElevationSouth },
];

const floors: Plan[] = [
  { title: "1.OG", drawing: FloorOne },
  { title: "2.OG", drawing: FloorTwo },
  { title: "3.OG", drawing: FloorThree, badge: 1 },
  { title: "DG", drawing: Attic },
  { drawing: RoofPlan },
  { drawing: DetailSheet },
];

export default function App() {
  return (
    <div
      className="h-screen overflow-hidden bg-linear-to-r from-[#cfcfcf] to-[#5d7f68] [font-variant-ligatures:no-common-ligatures]"
      style={{ fontFamily: "Lato, sans-serif" }}
    >
      <div className="flex h-full overflow-hidden rounded-b-[40px]">
        <Sidebar />
        <main className="flex min-w-0 flex-1 flex-col bg-[#f5f6f8]">
          <Header />
          <Toolbar />
          <FilterBar />
          <div className="mx-8 flex min-h-0 flex-1 flex-col gap-[30px] overflow-hidden border-b-2 border-[#cbcbcd] pt-[27px] pr-[300px] pl-6">
            <Folder id="outside" name="Außenansichten" count={2} plans={elevations} newLabel="+Neuer Plan" />
            <Folder id="inside" name="Innenansicht" count={6} plans={floors} />
          </div>
          <footer className="flex h-[77px] shrink-0 items-center px-[52px] text-[26px] text-[#3c3c3c]">
            26 Pläne
          </footer>
        </main>
        <div className="flex w-[30px] shrink-0 justify-center border-l-2 border-[#e6e6e8] bg-[#fafafa] pt-[490px]">
          <div className="h-[348px] w-4 rounded-full bg-[#c1c1c1]" />
        </div>
      </div>
    </div>
  );
}
